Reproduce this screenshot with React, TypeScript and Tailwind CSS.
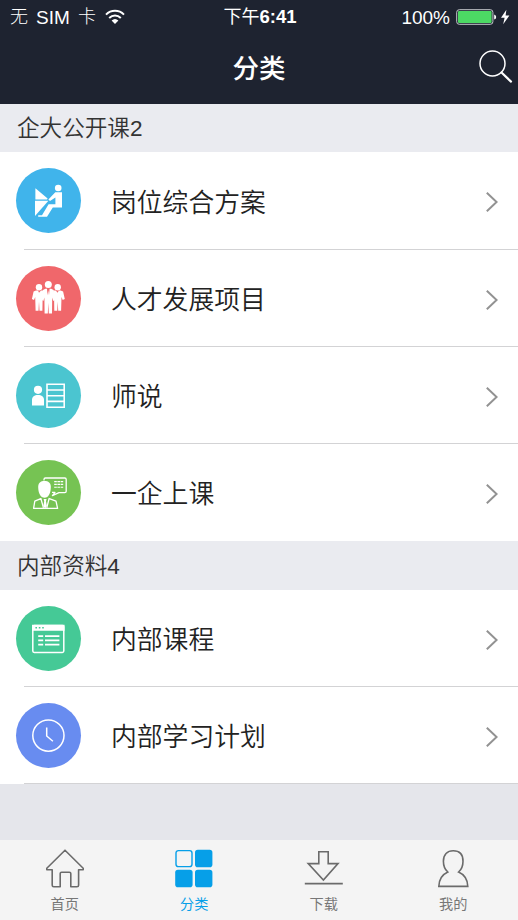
import type { ReactNode } from "react";

type Item = { label: string; color: string; icon: ReactNode };
type Section = { title: string; items: Item[] };

const DeskIcon = (
  <g fill="#fff">
    <circle cx="42.2" cy="20" r="3.3" />
    <path d="M19.4 20.3 31.6 30.6 31 31.4H19.4z" />
    <path d="M19 32.8H32.4L19 48z" />
    <path d="M39.3 24.2H46V39.4H36.8L31 48.8H22.2V47.2H26L32.6 36.2H39.4V29.4L34 33 32.4 31.4z" />
  </g>
);

const TeamIcon = (
  <g fill="#fff">
    <circle cx="23" cy="21.2" r="3.2" />
    <circle cx="41.7" cy="21.2" r="3.2" />
    <circle cx="32.3" cy="18.6" r="3.5" />
    <path d="M20 24.4 17.6 25.4 15.9 33 18 34 19.2 31 19.6 44.8H22.5L23 35.6 23.5 44.8H26.4L26.6 33 27.6 24.6 25 24.4 23 26.8 22 24.4z" />
    <path d="M44.7 24.4 47.1 25.4 48.8 33 46.7 34 45.5 31 45.1 44.8H42.2L41.7 35.6 41.2 44.8H38.3L38.1 33 37.1 24.6 39.7 24.4 41.7 26.8 42.7 24.4z" />
    <path d="M29.4 22.8 27 24 25.6 33.8 27.4 35 28.4 31.6 28.6 47.4H31.8L32.3 37 32.8 47.4H36L36.2 31.6 37.2 35 39 33.8 37.6 24 35.2 22.8H33.6L33 29.2 32.3 24 31.6 29.2 31 22.8z" />
  </g>
);

const TeacherIcon = (
  <g>
    <circle cx="22" cy="26.8" r="4.1" fill="#fff" />
    <path d="M16 42.6V37C16 33.6 18.4 32 22 32S28 33.6 28 37V42.6z" fill="#fff" />
    <path d="M31 21.2H48.2V44.2H31zM31 27H48.2M31 32.7H48.2M31 38.4H48.2" fill="none" stroke="#fff" strokeWidth="1.6" />
  </g>
);

const LessonIcon = (
  <g fill="none" stroke="#fff" strokeWidth="1.3" strokeLinejoin="round">
    <path d="M28 20.6V19.4Q28 18 29.4 18H48.8Q50.2 18 50.2 19.4V31.2Q50.2 32.6 48.8 32.6H43L36.4 35.6 39 32.4H36" />
    <path d="M38.2 21.6H47.8M38.2 24.4H47.8M38.2 27.2H47.8" strokeWidth="1.1" strokeDasharray="2.6 .6" />
    <path d="M22.2 27C22.2 22.8 24.6 21 28.5 21S34.8 22.8 34.8 27C34.8 32.8 32.6 37.8 28.5 37.8S22.2 32.8 22.2 27z" fill="#fff" stroke="none" />
    <path d="M25.4 38.4 18.8 41.2 17.6 48.4H41.6L40 41.2 32.6 38.4M25 39 27.4 47.6M33 39 30.8 47.6" />
    <path d="M27.6 39H30.6L30 41.2 30.9 46 29.1 48.6 27.3 46 28.2 41.2z" fill="#fff" stroke="none" />
  </g>
);

const CourseIcon = (
  <g fill="none" stroke="#fff" strokeWidth="1.5">
    <rect x="16.8" y="19.4" width="31" height="27" rx="1.4" />
    <path d="M16.8 19.4H47.8V24H16.8z" fill="#fff" />
    <path d="M22.2 30.2H27.2M29 30.2H43.4M22.2 34.4H27.2M29 34.4H43.4M22.2 38.6H27.2M29 38.6H43.4" strokeWidth="1.7" />
    <path d="M19.4 21.8H21M22.8 21.8H24.4M26.2 21.8H27.8" stroke="#45c996" strokeWidth="1.6" />
  </g>
);

const ClockIcon = (
  <g fill="none" stroke="#fff" strokeWidth="1.5">
    <circle cx="32.4" cy="32.6" r="15.6" />
    <path d="M30.7 24.4V33L36.9 38.2" />
  </g>
);

const sections: Section[] = [
  {
    title: "企大公开课2",
    items: [
      { label: "岗位综合方案", color: "bg-[#40b4eb]", icon: DeskIcon },
      { label: "人才发展项目", color: "bg-[#f0676b]", icon: TeamIcon },
      { label: "师说", color: "bg-[#4bc5d0]", icon: TeacherIcon },
      { label: "一企上课", color: "bg-[#76c353]", icon: LessonIcon },
    ],
  },
  {
    title: "内部资料4",
    items: [
      { label: "内部课程", color: "bg-[#45c996]", icon: CourseIcon },
      { label: "内部学习计划", color: "bg-[#688cf0]", icon: ClockIcon },
    ],
  },
];

const tabs = [
  {
    label: "首页",
    icon: (
      <path
        d="M20 1.2 38.2 19.2V20.8H33.6V36.2Q33.6 37.8 32 37.8H25.8V24.6Q25.8 23.2 24.4 23.2H16.6Q15.2 23.2 15.2 24.6V37.8H8.8Q7.2 37.8 7.2 36.2V20.8H1.8V19.2z"
        fill="none"
        stroke="#6b6b6b"
        strokeWidth="1.6"
        strokeLinejoin="round"
      />
    ),
  },
  {
    label: "分类",
    active: true,
    icon: (
      <g fill="#069fe8">
        <rect x="2" y="1.6" width="16" height="16" rx="2.4" fill="none" stroke="#069fe8" strokeWidth="1.4" />
        <rect x="21" y=".8" width="17.4" height="17.4" rx="2.8" />
        <rect x="1.2" y="20.8" width="17.4" height="17.4" rx="2.8" />
        <rect x="21" y="20.8" width="17.4" height="17.4" rx="2.8" />
      </g>
    ),
  },
  {
    label: "下载",
    icon: (
      <path
        d="M14.8 2.8H24.2V14.6H34L19.4 31 4.2 14.6H14.8zM.8 34.6H38.8"
        fill="none"
        stroke="#6b6b6b"
        strokeWidth="1.6"
      />
    ),
  },
  {
    label: "我的",
    icon: (
      <path
        d="M14.8 23C11.6 20.2 10.4 16.8 10.4 12.2C10.4 5.4 14.2 1.8 20.2 1.8S30 5.4 30 12.2C30 16.8 28.8 20.2 25.6 23C31 25.4 34.6 30.4 34.8 37.4H5.8C6 30.4 9.6 25.4 14.8 23z"
        fill="none"
        stroke="#6b6b6b"
        strokeWidth="1.6"
      />
    ),
  },
];

function StatusBar() {
  return (
    <div className="grid h-[34px] grid-cols-[1fr_auto_1fr] items-center pr-[7px] pl-[10px] text-[18px] leading-none">
      <div className="flex items-center font-light">
        <span className="flex w-[86px] justify-between whitespace-nowrap">
          <span>无</span>
          <span className="text-[19px]">SIM</span>
          <span>卡</span>
        </span>
        <svg className="ml-[9px] h-4 w-5" viewBox="0 0 20 16" fill="none" stroke="#fff" strokeWidth="2">
          <path d="M1 5.6C6 .6 14 .6 19 5.6M4.2 9C7.6 5.7 12.4 5.7 15.8 9" />
          <path d="M6.6 11.6Q10 8.6 13.4 11.6L10 15z" fill="#fff" stroke="none" />
        </svg>
      </div>
      <span className="pr-px">
        下午<span className="text-[18.5px] font-bold">6:41</span>
      </span>
      <div className="flex items-center justify-end">
        <span className="text-[19px]">100%</span>
        <svg className="ml-[6px] h-4 w-[55px]" viewBox="0 0 55 16">
          <rect x=".7" y=".7" width="36.2" height="14.6" rx="2.6" fill="none" stroke="#c5c8cc" />
          <rect x="2" y="2" width="33.6" height="12" rx="1" fill="#4cd964" />
          <path d="M38.2 5.4Q40.2 6 40.2 8T38.2 10.6z" fill="#fff" />
          <path d="M50.4.8 45 8.8H48.6L47.2 15.2 53.4 6.6H49.6z" fill="#fff" />
        </svg>
      </div>
    </div>
  );
}

function Row({ item, last }: { item: Item; last: boolean }) {
  return (
    <li className="flex h-[97.25px] flex-col bg-white">
      <div className="flex flex-1 items-center pt-px pr-[20px] pl-[16px]">
        <div className={`size-[65px] shrink-0 rounded-full ${item.color}`}>
          <svg className="size-[65px]" viewBox="0 0 65 65">
            {item.icon}
          </svg>
        </div>
        <span className="mt-[4px] ml-[30px] flex-1 text-[25.8px] font-[350] text-[#222]">{item.label}</span>
        <svg className="mt-[3px] h-5 w-3" viewBox="0 0 12 20" fill="none" stroke="#929292" strokeWidth="2">
          <path d="M.8.8 10.6 10 .8 19.2" />
        </svg>
      </div>
      <div className={last ? "h-px" : "ml-6 h-px bg-[#d3d3d5]"} />
    </li>
  );
}

export default function App() {
  return (
    <div className="flex h-[920px] w-[518px] flex-col overflow-hidden bg-[#e5e6eb] font-['Liberation_Sans','Noto_Sans_CJK_SC',sans-serif]">
      <header className="h-[104px] shrink-0 bg-[#1e2330] text-white">
        <StatusBar />
        <div className="grid h-[70px] grid-cols-[1fr_auto_1fr] items-center">
          <h1 className="col-start-2 text-[26.5px] leading-none font-medium">分类</h1>
          <svg
            className="mr-[5px] mb-1 size-[34px] justify-self-end"
            viewBox="0 0 34 34"
            fill="none"
            stroke="#fff"
            strokeLinecap="round"
          >
            <circle cx="13.5" cy="13.5" r="12.5" strokeWidth="1.5" />
            <path d="M22.5 22.5 32 31.6" strokeWidth="2.2" />
          </svg>
        </div>
      </header>
      <main className="flex-1">
        {sections.map((section, s) => (
          <section key={section.title}>
            <h2 className="flex h-[48.3px] items-center bg-[#eaebf0] pt-[2px] pl-[17px] text-[22.6px] font-[350] text-[#333]">
              {section.title}
            </h2>
            <ul>
              {section.items.map((item, i) => (
                <Row key={item.label} item={item} last={s === 0 && i === section.items.length - 1} />
              ))}
            </ul>
          </section>
        ))}
      </main>
      <nav className="grid h-20 shrink-0 grid-cols-4 bg-[#f4f4f4]">
        {tabs.map((tab) => (
          <div key={tab.label} className="flex flex-col items-center pt-[9px]">
            <svg className="size-10" viewBox="0 0 40 40">
              {tab.icon}
            </svg>
            <span className={`mt-[8px] text-[14.2px] leading-none ${tab.active ? "text-[#069fe8]" : "text-[#777]"}`}>
              {tab.label}
            </span>
          </div>
        ))}
      </nav>
    </div>
  );
}
